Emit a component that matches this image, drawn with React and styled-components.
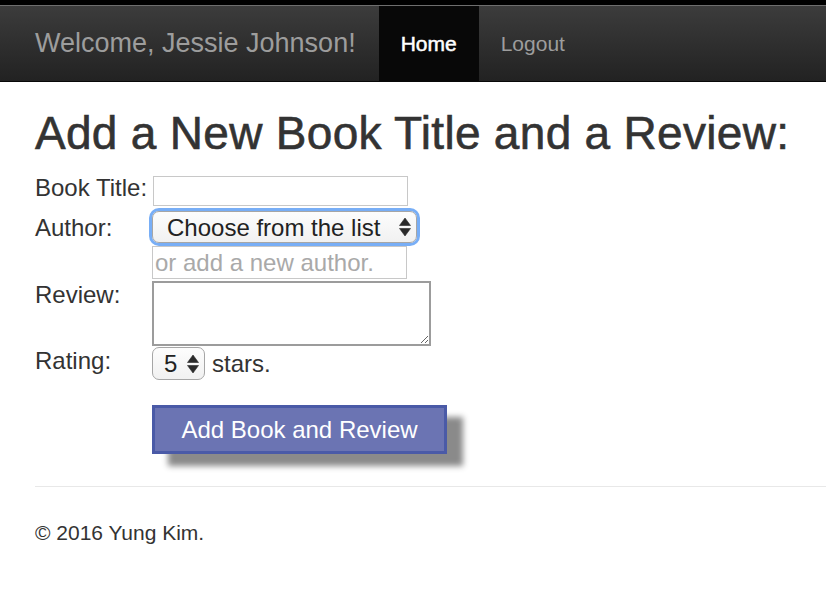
import React from "react";
import styled, { createGlobalStyle } from "styled-components";

const Global = createGlobalStyle`
  html, body { margin: 0; padding: 0; background: #fff; }
  body { font-family: "Liberation Sans", Arial, sans-serif; color: #333; }
  * { box-sizing: border-box; }
`;

const TopStrip = styled.div`
  height: 6px;
  background: #000;
  border-bottom: 1px solid #6e6e6e;
`;

const Navbar = styled.nav`
  height: 76px;
  display: flex;
  align-items: stretch;
  background: linear-gradient(to bottom, #3c3c3c 0%, #222 100%);
  border-bottom: 1px solid #080808;
  padding-left: 35px;
`;

const Brand = styled.div`
  display: flex;
  align-items: center;
  font-size: 27px;
  color: #9d9d9d;
  margin-right: 23px;
`;

const NavLink = styled.a`
  display: flex;
  align-items: center;
  padding: 0 22px;
  font-size: 21px;
  text-decoration: none;
  color: ${(p) => (p.$active ? "#fff" : "#9d9d9d")};
  background: ${(p) => (p.$active ? "#080808" : "transparent")};
  -webkit-text-stroke: ${(p) => (p.$active ? "0.5px #fff" : "0")};
`;

const Container = styled.main`
  padding-left: 35px;
`;

const Heading = styled.h1`
  margin: 26px 0 17px;
  font-size: 46px;
  line-height: 51px;
  font-weight: 500;
  letter-spacing: 0.3px;
  -webkit-text-stroke: 0.6px #333;
  color: #333;
  white-space: nowrap;
`;

const Form = styled.form`
  display: flex;
  flex-direction: column;
`;

const Row = styled.div`
  display: flex;
  align-items: flex-start;
  margin-top: ${(p) => p.$mt || 0}px;
`;

const Label = styled.label`
  width: 117px;
  flex: none;
  font-size: 24px;
  line-height: 28px;
  margin-top: ${(p) => p.$offset || 0}px;
  white-space: nowrap;
`;

const Field = styled.div`
  display: flex;
  flex-direction: column;
  align-items: flex-start;
  gap: ${(p) => p.$gap || 0}px;
`;

const TextInput = styled.input`
  width: 255px;
  height: ${(p) => p.$h}px;
  margin-left: ${(p) => p.$ml || 0}px;
  border: 1px solid #c8c8c8;
  font-family: inherit;
  font-size: 24px;
  padding: 0 2px;
  color: #333;
  outline: none;
  &::placeholder { color: #a9a9a9; }
`;

const SelectWrap = styled.div`
  position: relative;
  display: inline-flex;
  border-radius: 7px;
  box-shadow: ${(p) => (p.$focus ? "0 0 0 3px #78aef6" : "none")};
`;

const Select = styled.select`
  appearance: none;
  -webkit-appearance: none;
  width: ${(p) => p.$w}px;
  height: ${(p) => p.$h}px;
  border: 1px solid #a6a6a6;
  border-radius: 7px;
  background: linear-gradient(to bottom, #fdfdfd, #f1f1f1);
  font-family: inherit;
  font-size: 24px;
  color: #222;
  padding: 0 0 0 ${(p) => p.$pl}px;
  outline: none;
`;

const Arrows = styled.svg`
  position: absolute;
  right: ${(p) => p.$r}px;
  top: 50%;
  transform: translateY(-50%);
  pointer-events: none;
`;

const TextArea = styled.textarea`
  width: 279px;
  height: 65px;
  border: 2px solid #9c9c9c;
  font-family: inherit;
  font-size: 16px;
  resize: both;
  outline: none;
`;

const Inline = styled.div`
  display: flex;
  align-items: center;
  gap: 7px;
  font-size: 24px;
  line-height: 28px;
`;

const Button = styled.button`
  margin-left: 117px;
  width: 295px;
  height: 49px;
  background: #6b74b3;
  border: 3px solid #4a5aa7;
  color: #fff;
  font-family: inherit;
  font-size: 24px;
  box-shadow: 16px 12px 6px #8a8a8a;
  padding: 0;
`;

const Rule = styled.hr`
  margin: 32px 0 0;
  border: none;
  border-top: 1px solid #e8e8e8;
`;

const Footer = styled.footer`
  margin-top: 31px;
  font-size: 21px;
  line-height: 30px;
  color: #333;
`;

const UpDown = ({ r }) => (
  <Arrows $r={r} width="12" height="19" viewBox="0 0 12 19">
    <path d="M6 0.5 L11.5 8 L0.5 8 Z" fill="#2a2a2a" strokeLinejoin="round" stroke="#2a2a2a" strokeWidth="0.6" />
    <path d="M0.5 11 L11.5 11 L6 18.5 Z" fill="#2a2a2a" strokeLinejoin="round" stroke="#2a2a2a" strokeWidth="0.6" />
  </Arrows>
);

export default function App() {
  return (
    <>
      <Global />
      <TopStrip />
      <Navbar>
        <Brand>Welcome, Jessie Johnson!</Brand>
        <NavLink href="#" $active>Home</NavLink>
        <NavLink href="#">Logout</NavLink>
      </Navbar>
      <Container>
        <Heading>Add a New Book Title and a Review:</Heading>
        <Form onSubmit={(e) => e.preventDefault()}>
          <Row>
            <Label $offset={-2}>Book Title:</Label>
            <TextInput $h={30} $ml={1} />
          </Row>
          <Row $mt={5}>
            <Label $offset={3}>Author:</Label>
            <Field $gap={3}>
              <SelectWrap $focus>
                <Select $w={265} $h={32} $pl={14} defaultValue="">
                  <option value="">Choose from the list</option>
                </Select>
                <UpDown r={6} />
              </SelectWrap>
              <TextInput $h={33} placeholder="or add a new author." />
            </Field>
          </Row>
          <Row $mt={2}>
            <Label>Review:</Label>
            <TextArea />
          </Row>
          <Row $mt={1}>
            <Label>Rating:</Label>
            <Inline>
              <SelectWrap>
                <Select $w={53} $h={33} $pl={11} defaultValue="5">
                  <option>5</option>
                  <option>4</option>
                  <option>3</option>
                  <option>2</option>
                  <option>1</option>
                </Select>
                <UpDown r={6} />
              </SelectWrap>
              <span>stars.</span>
            </Inline>
          </Row>
          <Row $mt={25}>
            <Button type="submit">Add Book and Review</Button>
          </Row>
        </Form>
        <Rule />
        <Footer>© 2016 Yung Kim.</Footer>
      </Container>
    </>
  );
}
